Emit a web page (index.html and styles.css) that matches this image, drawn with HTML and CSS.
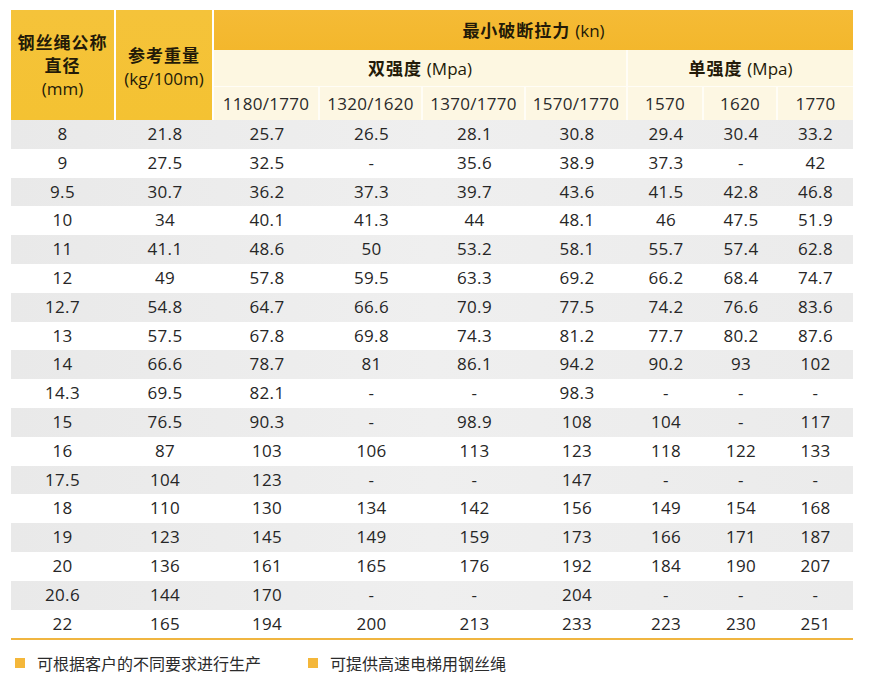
FILE: index.html
```html
<!DOCTYPE html>
<html lang="zh-CN">
<head>
<meta charset="utf-8">
<title>钢丝绳参数表</title>
<link rel="stylesheet" href="styles.css">
</head>
<body>
<div class="sheet">
  <div class="head">
    <div class="h-dia">钢丝绳公称<br>直径<br><span class="unit">(mm)</span></div>
    <div class="h-wt">参考重量<br><span class="unit">(kg/100m)</span></div>
    <div class="h-band"><span>最小破断拉力 <span class="unit">(kn)</span></span></div>
    <div class="h-dual"><span>双强度 <span class="unit">(Mpa)</span></span></div>
    <div class="h-single"><span>单强度 <span class="unit">(Mpa)</span></span></div>
    <div class="h-sub">1180/1770</div>
    <div class="h-sub">1320/1620</div>
    <div class="h-sub">1370/1770</div>
    <div class="h-sub">1570/1770</div>
    <div class="h-sub">1570</div>
    <div class="h-sub">1620</div>
    <div class="h-sub last">1770</div>
  </div>
  <div class="body">
    <div class="row alt"><span>8</span><span>21.8</span><span>25.7</span><span>26.5</span><span>28.1</span><span>30.8</span><span>29.4</span><span>30.4</span><span>33.2</span></div>
    <div class="row"><span>9</span><span>27.5</span><span>32.5</span><span>-</span><span>35.6</span><span>38.9</span><span>37.3</span><span>-</span><span>42</span></div>
    <div class="row alt"><span>9.5</span><span>30.7</span><span>36.2</span><span>37.3</span><span>39.7</span><span>43.6</span><span>41.5</span><span>42.8</span><span>46.8</span></div>
    <div class="row"><span>10</span><span>34</span><span>40.1</span><span>41.3</span><span>44</span><span>48.1</span><span>46</span><span>47.5</span><span>51.9</span></div>
    <div class="row alt"><span>11</span><span>41.1</span><span>48.6</span><span>50</span><span>53.2</span><span>58.1</span><span>55.7</span><span>57.4</span><span>62.8</span></div>
    <div class="row"><span>12</span><span>49</span><span>57.8</span><span>59.5</span><span>63.3</span><span>69.2</span><span>66.2</span><span>68.4</span><span>74.7</span></div>
    <div class="row alt"><span>12.7</span><span>54.8</span><span>64.7</span><span>66.6</span><span>70.9</span><span>77.5</span><span>74.2</span><span>76.6</span><span>83.6</span></div>
    <div class="row"><span>13</span><span>57.5</span><span>67.8</span><span>69.8</span><span>74.3</span><span>81.2</span><span>77.7</span><span>80.2</span><span>87.6</span></div>
    <div class="row alt"><span>14</span><span>66.6</span><span>78.7</span><span>81</span><span>86.1</span><span>94.2</span><span>90.2</span><span>93</span><span>102</span></div>
    <div class="row"><span>14.3</span><span>69.5</span><span>82.1</span><span>-</span><span>-</span><span>98.3</span><span>-</span><span>-</span><span>-</span></div>
    <div class="row alt"><span>15</span><span>76.5</span><span>90.3</span><span>-</span><span>98.9</span><span>108</span><span>104</span><span>-</span><span>117</span></div>
    <div class="row"><span>16</span><span>87</span><span>103</span><span>106</span><span>113</span><span>123</span><span>118</span><span>122</span><span>133</span></div>
    <div class="row alt"><span>17.5</span><span>104</span><span>123</span><span>-</span><span>-</span><span>147</span><span>-</span><span>-</span><span>-</span></div>
    <div class="row"><span>18</span><span>110</span><span>130</span><span>134</span><span>142</span><span>156</span><span>149</span><span>154</span><span>168</span></div>
    <div class="row alt"><span>19</span><span>123</span><span>145</span><span>149</span><span>159</span><span>173</span><span>166</span><span>171</span><span>187</span></div>
    <div class="row"><span>20</span><span>136</span><span>161</span><span>165</span><span>176</span><span>192</span><span>184</span><span>190</span><span>207</span></div>
    <div class="row alt"><span>20.6</span><span>144</span><span>170</span><span>-</span><span>-</span><span>204</span><span>-</span><span>-</span><span>-</span></div>
    <div class="row"><span>22</span><span>165</span><span>194</span><span>200</span><span>213</span><span>233</span><span>223</span><span>230</span><span>251</span></div>
  </div>
  <div class="notes">
    <div class="note"><i class="dot"></i><span>可根据客户的不同要求进行生产</span></div>
    <div class="note"><i class="dot"></i><span>可提供高速电梯用钢丝绳</span></div>
  </div>
</div>
</body>
</html>
```
FILE: styles.css
```css
html, body {
  margin: 0;
  padding: 0;
  background: #ffffff;
}
.sheet {
  width: 842px;
  margin: 10px 0 0 11px;
  font-family: "Open Sans", "Noto Sans CJK SC", sans-serif;
  color: #262626;
}
.head {
  display: grid;
  grid-template-columns: 105px 98px 106px 103px 103px 102px 76px 74px 75px;
  grid-template-rows: 40px 37px 33px;
}
.h-dia, .h-wt {
  grid-row: 1 / 4;
  background: linear-gradient(180deg, #f5c33a 0%, #f4c232 100%);
  border-right: 2px solid #ffffff;
  text-align: center;
  font-family: "Noto Sans CJK SC", sans-serif;
  font-weight: 700;
  font-size: 17px;
  line-height: 23px;
  letter-spacing: 1px;
  color: #231a08;
}
.h-dia { grid-column: 1; padding-top: 20px; }
.h-wt { grid-column: 2; padding-top: 33px; }
.unit {
  font-family: "Open Sans", sans-serif;
  font-weight: 400;
  letter-spacing: 0;
}
.h-band {
  grid-column: 3 / 10;
  grid-row: 1;
  background: linear-gradient(180deg, #f5bb36 0%, #f3b72c 100%);
  display: flex;
  align-items: center;
  justify-content: center;
  font-family: "Noto Sans CJK SC", sans-serif;
  font-weight: 700;
  font-size: 17px;
  letter-spacing: 1px;
  color: #231a08;
  padding-bottom: 2px;
}
.h-dual, .h-single {
  grid-row: 2;
  background: #fdf7e1;
  display: flex;
  align-items: center;
  justify-content: center;
  font-family: "Noto Sans CJK SC", sans-serif;
  font-weight: 700;
  font-size: 17px;
  letter-spacing: 1px;
  color: #231a08;
  border-bottom: 1px solid #fffdf6;
  padding-bottom: 2px;
}
.h-dual { grid-column: 3 / 7; border-right: 2px solid #fffdf6; }
.h-single { grid-column: 7 / 10; }
.h-sub {
  grid-row: 3;
  background: #fdf7e3;
  border-right: 2px solid #fffdf6;
  display: flex;
  align-items: center;
  justify-content: center;
  font-size: 17px;
  letter-spacing: 0.3px;
  color: #2a2a2a;
}
.h-sub.last { border-right: none; }
.body {
  border-bottom: 2px solid #f0b540;
}
.row {
  display: grid;
  grid-template-columns: 105px 98px 106px 103px 103px 102px 76px 74px 75px;
  height: 28.8px;
  align-items: center;
  font-size: 17px;
  letter-spacing: 0.3px;
  color: #262626;
}
.row span {
  text-align: center;
  line-height: 28.8px;
}
.row span:first-child { padding-right: 2px; }
.row.alt {
  background: linear-gradient(90deg, #e9e9e9 0%, #efefef 50%, #ebebeb 100%);
}
.notes {
  display: flex;
  padding: 11px 0 0 4px;
  font-family: "Noto Sans CJK SC", sans-serif;
  font-size: 16px;
  color: #2b2b2b;
}
.note {
  display: flex;
  align-items: center;
  gap: 12px;
}
.note + .note { margin-left: 47px; }
.dot {
  display: block;
  width: 10px;
  height: 10px;
  background: #f4b73a;
}
```
